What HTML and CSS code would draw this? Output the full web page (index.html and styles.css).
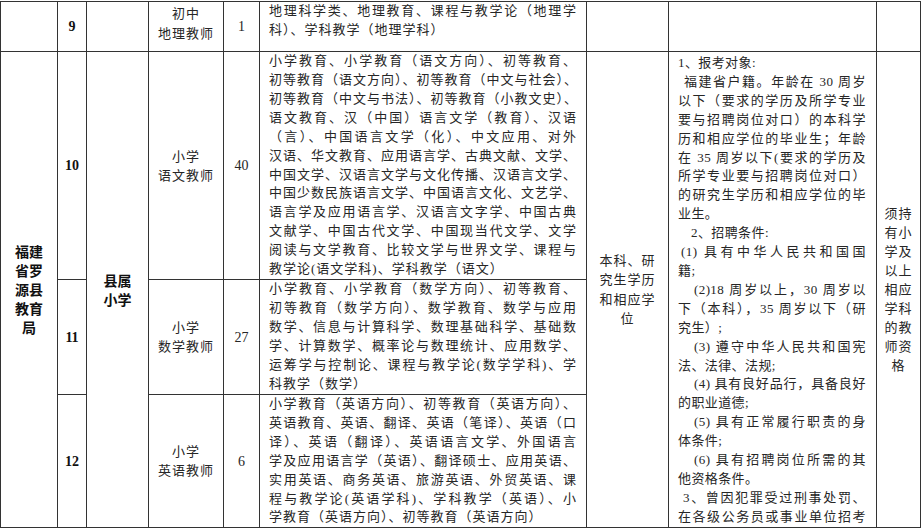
FILE: index.html
```html
<!DOCTYPE html>
<html lang="zh-CN">
<head>
<meta charset="utf-8">
<title>招聘岗位表</title>
<link rel="stylesheet" href="styles.css">
</head>
<body>
<table class="sheet">
  <colgroup>
    <col class="c1"><col class="c2"><col class="c3"><col class="c4"><col class="c5"><col class="c6"><col class="c7"><col class="c8"><col class="c9">
  </colgroup>
  <tr class="r9">
    <td class="h9"></td>
    <td class="num">9</td>
    <td></td>
    <td class="pos top">初中<br>地理教师</td>
    <td class="cnt">1</td>
    <td class="maj top">
      <div class="ln j">地理科学类、地理教育、课程与教学论（地理学</div>
      <div class="ln">科）、学科教学（地理学科）</div>
    </td>
    <td></td>
    <td></td>
    <td></td>
  </tr>
  <tr class="r10">
    <td rowspan="3" class="org">福建省罗源县教育局</td>
    <td class="num">10</td>
    <td rowspan="3" class="org">县属<br>小学</td>
    <td class="pos">小学<br>语文教师</td>
    <td class="cnt">40</td>
    <td class="maj">
      <div class="ln j">小学教育、小学教育（语文方向）、初等教育、</div>
      <div class="ln j t">初等教育（语文方向）、初等教育（中文与社会）、</div>
      <div class="ln j t">初等教育（中文与书法）、初等教育（小教文史）、</div>
      <div class="ln j">语文教育、汉（中国）语言文学（教育）、汉语</div>
      <div class="ln j">（言）、中国语言文学（化）、中文应用、对外</div>
      <div class="ln j">汉语、华文教育、应用语言学、古典文献、文学、</div>
      <div class="ln j">中国文学、汉语言文学与文化传播、汉语言文学、</div>
      <div class="ln j">中国少数民族语言文学、中国语言文化、文艺学、</div>
      <div class="ln j">语言学及应用语言学、汉语言文字学、中国古典</div>
      <div class="ln j">文献学、中国古代文学、中国现当代文学、文学</div>
      <div class="ln j">阅读与文学教育、比较文学与世界文学、课程与</div>
      <div class="ln">教学论(语文学科)、学科教学（语文）</div>
    </td>
    <td rowspan="3" class="edu">本科、研<br>究生学历<br>和相应学<br>位</td>
    <td rowspan="3" class="cond">
      <div class="ln">1、报考对象:</div>
      <div class="ln j i1">福建省户籍。年龄在 30 周岁</div>
      <div class="ln j">以下（要求的学历及所学专业</div>
      <div class="ln j">要与招聘岗位对口）的本科学</div>
      <div class="ln j">历和相应学位的毕业生；年龄</div>
      <div class="ln j">在 35 周岁以下(要求的学历及</div>
      <div class="ln j">所学专业要与招聘岗位对口）</div>
      <div class="ln j">的研究生学历和相应学位的毕</div>
      <div class="ln">业生。</div>
      <div class="ln i2">2、招聘条件:</div>
      <div class="ln j i3">(1) 具有中华人民共和国国</div>
      <div class="ln">籍;</div>
      <div class="ln j i4">(2)18 周岁以上，30 周岁以</div>
      <div class="ln j">下（本科），35 周岁以下（研</div>
      <div class="ln">究生）;</div>
      <div class="ln j i4">(3) 遵守中华人民共和国宪</div>
      <div class="ln">法、法律、法规;</div>
      <div class="ln j i4">(4) 具有良好品行，具备良好</div>
      <div class="ln">的职业道德;</div>
      <div class="ln j i4">(5) 具有正常履行职责的身</div>
      <div class="ln">体条件;</div>
      <div class="ln j i4">(6) 具有招聘岗位所需的其</div>
      <div class="ln">他资格条件。</div>
      <div class="ln j i5">3、曾因犯罪受过刑事处罚、</div>
      <div class="ln j">在各级公务员或事业单位招考</div>
    </td>
    <td rowspan="3" class="cert">须持<br>有小<br>学及<br>以上<br>相应<br>学科<br>的教<br>师资<br>格</td>
  </tr>
  <tr class="r11">
    <td class="num">11</td>
    <td class="pos">小学<br>数学教师</td>
    <td class="cnt">27</td>
    <td class="maj">
      <div class="ln j">小学教育、小学教育（数学方向）、初等教育、</div>
      <div class="ln j">初等教育（数学方向）、数学教育、数学与应用</div>
      <div class="ln j">数学、信息与计算科学、数理基础科学、基础数</div>
      <div class="ln j">学、计算数学、概率论与数理统计、应用数学、</div>
      <div class="ln j">运筹学与控制论、课程与教学论(数学学科)、学</div>
      <div class="ln">科教学（数学）</div>
    </td>
  </tr>
  <tr class="r12">
    <td class="num">12</td>
    <td class="pos">小学<br>英语教师</td>
    <td class="cnt">6</td>
    <td class="maj">
      <div class="ln j">小学教育（英语方向）、初等教育（英语方向）、</div>
      <div class="ln j">英语教育、英语、翻译、英语（笔译）、英语（口</div>
      <div class="ln j">译）、英语（翻译）、英语语言文学、外国语言</div>
      <div class="ln j">学及应用语言学（英语）、翻译硕士、应用英语、</div>
      <div class="ln j">实用英语、商务英语、旅游英语、外贸英语、课</div>
      <div class="ln j">程与教学论(英语学科)、学科教学（英语）、小</div>
      <div class="ln">学教育（英语方向）、初等教育（英语方向）</div>
    </td>
  </tr>
</table>
</body>
</html>
```

FILE: styles.css
```css
html, body {
  margin: 0;
  padding: 0;
  background: #ffffff;
}

body {
  font-family: "Liberation Serif", "Noto Sans CJK SC", serif;
  color: #262626;
  overflow: hidden;
}

.sheet {
  border-collapse: collapse;
  table-layout: fixed;
  width: 921px;
  margin-top: 1px;
}

.sheet td {
  border: 1px solid #333333;
  padding: 0;
  vertical-align: middle;
  text-align: center;
  font-size: 13px;
  line-height: 19px;
  letter-spacing: 1px;
  overflow: hidden;
}

.c1 { width: 57px; }
.c2 { width: 29px; }
.c3 { width: 62px; }
.c4 { width: 75px; }
.c5 { width: 36px; }
.c6 { width: 327px; }
.c7 { width: 82px; }
.c8 { width: 208px; }
.c9 { width: 44px; }

.r9 { height: 49px; }
.r10 { height: 228px; }
.r11 { height: 115px; }
.r12 { height: 133px; }

.sheet td.h9 { height: 49px; }

.sheet td.top {
  vertical-align: top;
  padding-top: 2px;
  line-height: 20px;
}

.sheet td.num {
  font-weight: 700;
  font-size: 14px;
  letter-spacing: 0;
  color: #111111;
}

.sheet td.cnt {
  font-size: 14px;
  letter-spacing: 0;
}

.sheet td.org {
  font-family: "Noto Sans CJK SC", sans-serif;
  font-weight: 700;
  font-size: 14px;
  letter-spacing: 0;
  line-height: 19px;
  padding: 0 12px;
  color: #111111;
}

.sheet td.maj {
  text-align: left;
  padding: 0 9px;
  line-height: 18.9px;
}

.sheet td.edu {
  line-height: 19.5px;
}

.sheet td.cond {
  text-align: left;
  vertical-align: top;
  padding: 2px 10px 0 9px;
  line-height: 18.9px;
  letter-spacing: 0.4px;
}

.ln {
  white-space: normal;
}

.j {
  text-align: justify;
  text-align-last: justify;
}

.t {
  letter-spacing: 0;
}

.i1 { text-indent: 6px; }
.i2 { text-indent: 13px; }
.i3 { text-indent: 3px; }
.i4 { text-indent: 16px; }
.i5 { text-indent: 5px; }
```
